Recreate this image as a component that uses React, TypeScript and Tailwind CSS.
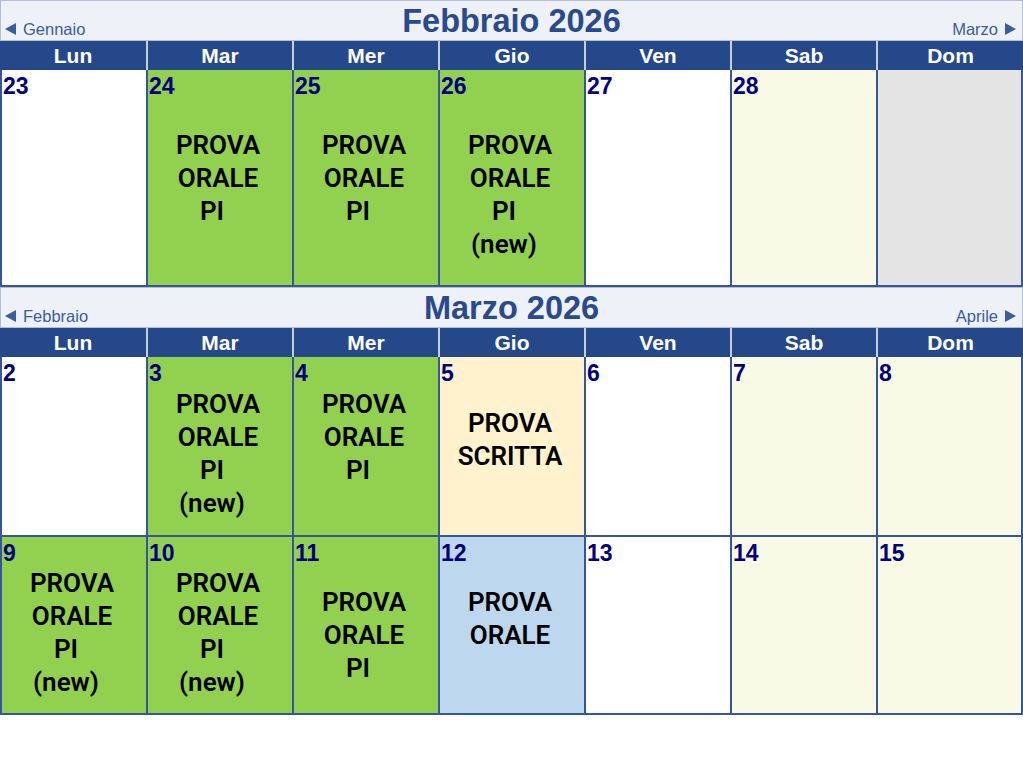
type Cell = {
  day?: number;
  bg: string;
  lines?: string[];
  mt?: string;
};

type Month = {
  title: string;
  prev: string;
  next: string;
  weeks: { h: string; cells: Cell[] }[];
};

const DAYS = ['Lun', 'Mar', 'Mer', 'Gio', 'Ven', 'Sab', 'Dom'];

const WHITE = 'bg-white';
const GREEN = 'bg-[#92d050]';
const CREAM = 'bg-[#f9fae6]';
const GRAY = 'bg-[#e4e4e4]';
const PEACH = 'bg-[#fff2cc]';
const BLUE = 'bg-[#bdd7ee]';

const ORALE = ['PROVA', 'ORALE', 'PI'];
const ORALE_NEW = ['PROVA', 'ORALE', 'PI', '(new)'];

const months: Month[] = [
  {
    title: 'Febbraio 2026',
    prev: 'Gennaio',
    next: 'Marzo',
    weeks: [
      {
        h: 'h-[217px]',
        cells: [
          { day: 23, bg: WHITE },
          { day: 24, bg: GREEN, lines: ORALE, mt: 'mt-[30px]' },
          { day: 25, bg: GREEN, lines: ORALE, mt: 'mt-[30px]' },
          { day: 26, bg: GREEN, lines: ORALE_NEW, mt: 'mt-[30px]' },
          { day: 27, bg: WHITE },
          { day: 28, bg: CREAM },
          { bg: GRAY },
        ],
      },
    ],
  },
  {
    title: 'Marzo 2026',
    prev: 'Febbraio',
    next: 'Aprile',
    weeks: [
      {
        h: 'h-[180px]',
        cells: [
          { day: 2, bg: WHITE },
          { day: 3, bg: GREEN, lines: ORALE_NEW, mt: 'mt-[2px]' },
          { day: 4, bg: GREEN, lines: ORALE, mt: 'mt-[2px]' },
          { day: 5, bg: PEACH, lines: ['PROVA', 'SCRITTA'], mt: 'mt-[21px]' },
          { day: 6, bg: WHITE },
          { day: 7, bg: CREAM },
          { day: 8, bg: CREAM },
        ],
      },
      {
        h: 'h-[178px]',
        cells: [
          { day: 9, bg: GREEN, lines: ORALE_NEW, mt: 'mt-[1px]' },
          { day: 10, bg: GREEN, lines: ORALE_NEW, mt: 'mt-[1px]' },
          { day: 11, bg: GREEN, lines: ORALE, mt: 'mt-[20px]' },
          { day: 12, bg: BLUE, lines: ['PROVA', 'ORALE'], mt: 'mt-[20px]' },
          { day: 13, bg: WHITE },
          { day: 14, bg: CREAM },
          { day: 15, bg: CREAM },
        ],
      },
    ],
  },
];

function Arrow({ dir }: { dir: 'left' | 'right' }) {
  return (
    <svg width="11" height="12" viewBox="0 0 11 12" className="inline-block">
      <path d={dir === 'left' ? 'M0 6 L11 0 L11 12 Z' : 'M11 6 L0 0 L0 12 Z'} fill="#3d5c9c" />
    </svg>
  );
}

function MonthHeader({ m }: { m: Month }) {
  return (
    <div className="grid h-[41px] grid-cols-[1fr_auto_1fr] border border-[#b3bdd3] bg-[#eef1f7]">
      <span className="flex items-center gap-[7px] self-end pb-[1px] pl-[4px] text-[16.5px] leading-[20px] text-[#3d5c9c]">
        <Arrow dir="left" />
        {m.prev}
      </span>
      <h2 className="self-center text-[32.5px] font-bold leading-[36px] text-[#294a8c]">{m.title}</h2>
      <span className="flex items-center gap-[7px] self-end justify-self-end pb-[1px] pr-[6px] text-[16.5px] leading-[20px] text-[#3d5c9c]">
        {m.next}
        <Arrow dir="right" />
      </span>
    </div>
  );
}

// short lines ("PI", "(new)") sit a little left of centre in the original
const lineShift = (l: string) => (l.length <= 2 || l.startsWith('(') ? 'pr-[16px]' : 'pr-[4px]');

function DayCell({ c, i }: { c: Cell; i: number }) {
  return (
    <div
      className={`${c.bg} border-b-2 border-l-2 border-[#35579a] ${i === 6 ? 'border-r-2' : ''} flex flex-col`}
    >
      {c.day !== undefined && (
        <div className="mt-[3px] pl-[1px] text-[23px] font-bold leading-[26px] text-[#000080]">{c.day}</div>
      )}
      {c.lines && (
        <div
          className={`${c.mt} text-center font-[family-name:Roboto,sans-serif] text-[26px] font-semibold leading-[33px] text-black`}
        >
          {c.lines.map((l) => (
            <div key={l} className={lineShift(l)}>
              {l}
            </div>
          ))}
        </div>
      )}
    </div>
  );
}

function MonthView({ m }: { m: Month }) {
  return (
    <section>
      <MonthHeader m={m} />
      <div className="grid h-[29px] grid-cols-[repeat(6,146px)_1fr] bg-[#25488b]">
        {DAYS.map((d, i) => (
          <div
            key={d}
            className={`text-center text-[21px] font-bold leading-[29px] text-white ${i > 0 ? 'border-l-2 border-[#c7cdd9]' : ''}`}
          >
            {d}
          </div>
        ))}
      </div>
      {m.weeks.map((w, wi) => (
        <div key={wi} className={`grid ${w.h} grid-cols-[repeat(6,146px)_1fr]`}>
          {w.cells.map((c, i) => (
            <DayCell key={i} c={c} i={i} />
          ))}
        </div>
      ))}
    </section>
  );
}

export default function App() {
  return (
    <div className="h-[763px] w-[1023px] bg-white font-[family-name:Liberation_Sans,Arial,sans-serif]">
      {months.map((m) => (
        <MonthView key={m.title} m={m} />
      ))}
    </div>
  );
}
